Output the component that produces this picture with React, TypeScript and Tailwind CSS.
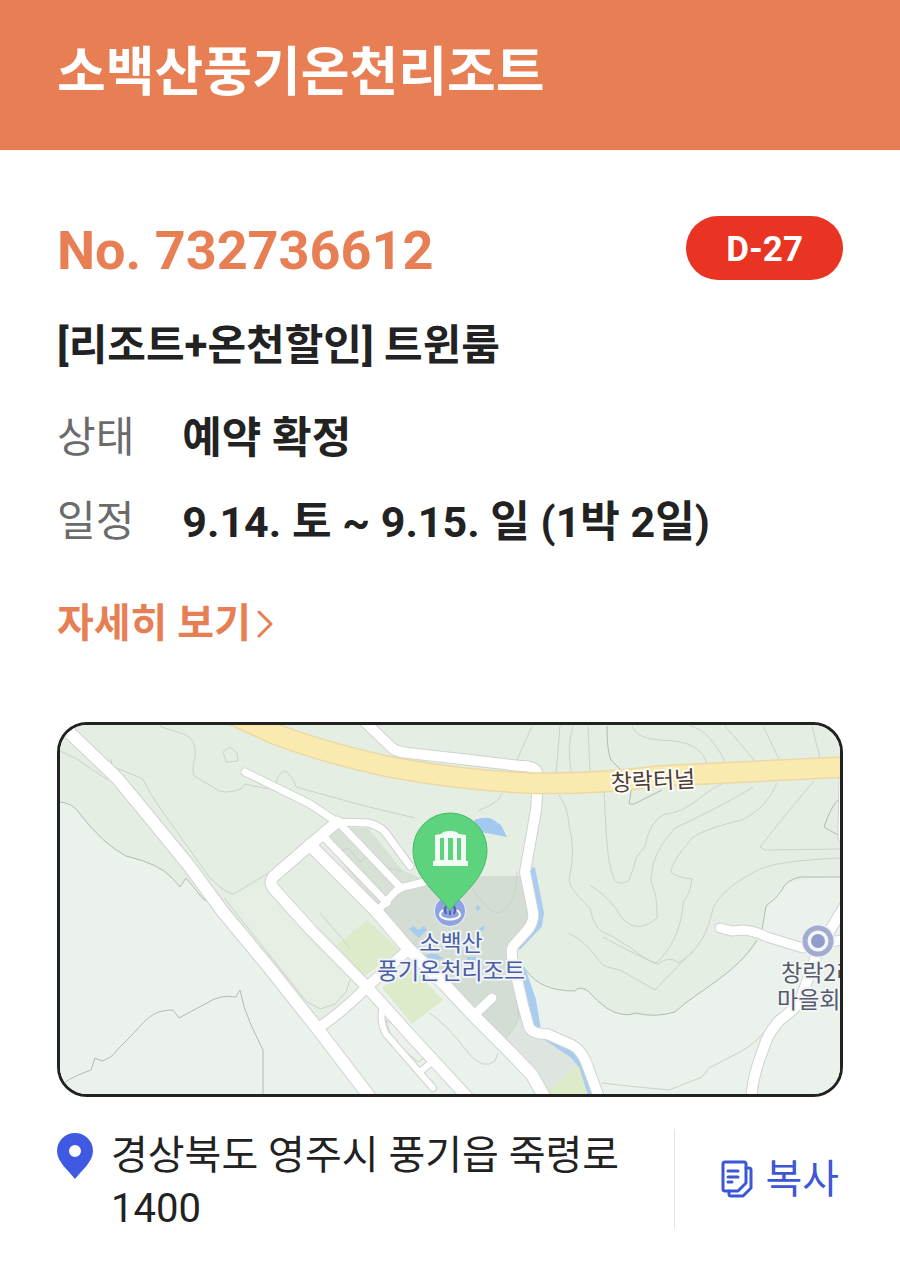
import type { ReactNode } from "react";

const FONT = "font-['Roboto','Noto_Sans_CJK_KR',sans-serif]";

type Road = { d: string; w: number };

const ROADS: Road[] = [
  { d: "M60 724 L70 733 L117 778 L150 818 L190 867 L223 912 L267 965 L317 1028 L372 1100", w: 12 },
  { d: "M337 822 L310 845 L273 877 Q269 883 274 889 L311 930 L367 987 L410 1035 L470 1100", w: 11 },
  { d: "M245 772 L310 804 L337 822 L368 823 Q378 825 385 832 L410 866", w: 7 },
  { d: "M340 824 L401 888", w: 7 },
  { d: "M323 836 L387 903", w: 7 },
  { d: "M378 910 L395 892 Q400 887 408 886 L432 880", w: 7 },
  { d: "M310 845 L377 912 L407 947 L443 983 L473 1015 L510 1052 L532 1075 L546 1100", w: 12 },
  { d: "M318 1028 Q340 1014 367 987 L409 949", w: 10 },
  { d: "M473 1016 L492 998", w: 9 },
  { d: "M382 1010 Q380 1024 386 1034 L433 1088", w: 6 },
  { d: "M420 1072 L434 1060", w: 6 },
  { d: "M363 720 L392 748 Q397 752 408 753 L470 760 L520 766 Q540 765 538 780 L536 810 L525 872 L533 912 Q535 923 524 934 L514 945 Q510 950 513 962 L523 1005 L529 1027 Q532 1034 547 1034 L572 1045 Q581 1050 586 1062 L600 1100", w: 10 },
  { d: "M720 928 L732 931 L743 930 Q756 931 767 937 L803 948 L845 939", w: 9 },
  { d: "M848 900 L818 951 L800 1001 Q794 1010 780 1020 Q768 1032 763 1050 Q753 1074 751 1100", w: 10 },
  { d: "M843 775 L842 838", w: 7 },
];

const CONTOURS: string[] = [
  "M160 726 C180 735 197 731 195 757 C192 768 193 775 194 776 L213 787 Q222 796 241 789 L245 784 L268 789",
  "M223 752 L230 747 L237 753 L238 761 L226 762 Z",
  "M60 751 L75 758 L108 780",
  "M111 759 L112 766 L143 779 Q147 790 165 815 L210 878 Q228 895 234 894 L283 864",
  "M275 784 Q281 768 287 772 Q295 780 296 787 L365 806 L415 818",
  "M478 811 Q503 800 501 794",
  "M532 726 L517 760",
  "M560 726 L556 774 M573 726 Q566 750 572 774",
  "M559 795 Q568 808 569 825 Q576 850 569 880 Q570 890 590 908 Q594 932 610 935 L631 948 Q653 965 658 964 Q669 955 679 963 L693 952",
  "M588 726 L590 772 M604 792 C606 815 605 860 615 881 Q621 886 629 880 Q634 868 636 858 L645 846 Q650 820 665 814 C690 812 702 792 722 784",
  "M632 726 C641 746 670 736 690 745 Q705 752 707 765",
  "M690 726 Q710 730 726 764 M725 726 L756 762",
  "M753 787 Q730 802 675 828 Q652 852 651 878 C651 890 657 885 657 918 Q637 935 622 918 Q611 898 590 885",
  "M777 783 Q767 808 742 820 Q710 827 693 837 Q671 862 671 872 Q675 877 692 879 Q690 895 683 902 C683 920 674 948 656 963 Q637 956 603 937",
  "M814 781 Q798 799 760 847 L765 850 L840 849",
  "M763 726 L779 759 M812 726 L820 758",
  "M840 858 Q777 861 760 869 Q720 889 713 909 Q706 942 687 957 L655 990 L620 970 Q603 967 600 962 Q585 940 568 933",
  "M320 913 L350 948 M350 980 L346 992 L335 1004 L320 1009 L306 1001 L224 898",
  "M602 1083 L628 1086 L669 1090 L702 1077 L709 1068 L738 1053 Q755 1044 764 1032",
  "M429 1013 Q445 1022 470 1055 Q484 1070 495 1061 L498 1053",
  "M517 980 L518 1020 Q512 1034 502 1041",
  "M386 1020 L392 1040 L418 1062 L425 1057 L405 1032 Z",
  "M335 854 L348 848 L360 862 L368 855 L388 868 L402 871",
  "M472 888 Q492 917 500 912 Q517 905 517 872",
];

const DARK_CONTOURS: string[] = [
  "M60 802 Q73 803 80 814 Q103 844 126 856 Q160 864 172 878 L180 887 L186 878 L204 900 L209 900",
  "M60 1088 Q63 1080 91 1070 L95 1058 L102 1061 Q112 1058 118 1049 L128 1039 C145 1022 150 1010 173 1010 L179 1018 L205 1004 Q220 994 236 997 L240 990 Q243 1007 251 1025 L263 1050 L263 1096",
  "M607 726 Q607 752 611 760 L620 769 M632 785 L629 804 L634 804 L662 790",
  "M839 799 Q831 806 824 827 L838 835",
  "M840 877 L800 877 Q786 880 782 890 Q776 899 766 906 L762 930",
  "M526 970 Q540 991 575 991 Q579 985 588 991 Q608 1013 621 1014 Q628 1016 636 1013 Q654 1018 675 1012 C700 989 735 975 757 940",
];

function ResortMap() {
  return (
    <svg viewBox="60 725 780 369" className="block h-auto w-full" role="img" aria-label="소백산 풍기온천리조트 지도">
      <rect x="60" y="725" width="780" height="369" fill="#e5eee3" />
      <path d="M60 802 Q73 803 80 814 Q103 844 126 856 Q160 864 180 887 L186 878 L209 900 L317 1028 L400 940 L460 1000 L545 1050 L600 1060 L600 1094 L60 1094 Z" fill="#ebf1eb" />
      <path d="M533 1094 L520 970 L530 975 Q548 991 588 991 Q608 1013 621 1014 Q650 1018 675 1012 C700 989 735 975 760 940 Q762 900 782 890 Q786 877 840 877 V1094 Z" fill="#ebf1eb" />
      <path d="M228 894 L268 883 L365 985 L320 1009 L306 1001 Z" fill="#e7efe5" />
      <path d="M343 828 L368 828 L402 870 L425 880 L398 891 Z M323 840 L340 828 L398 889 L378 907 Z" fill="#d7e1d6" />
      <path d="M378 912 L400 888 L430 880 L480 876 L524 876 L533 918 L511 946 L520 1000 L532 1034 L575 1054 L583 1065 L545 1096 L407 950 Z" fill="#d3ddd3" />
      <path d="M518 1020 Q512 1034 498 1045 L548 1094 L583 1063 L573 1046 L540 1036 L524 1012 Z" fill="#dee5df" />
      <path d="M337 945 L367 920 L400 950 L366 975 L358 973 Z M382 988 L396 978 L412 968 L443 1000 L412 1024 Z M546 1094 L578 1064 L592 1094 Z" fill="#ddebca" />

      <g fill="none" stroke="#cbd2ca" strokeWidth="1">
        {CONTOURS.map((d) => (
          <path key={d} d={d} />
        ))}
      </g>
      <g fill="none" stroke="#b3bab3" strokeWidth="1">
        {DARK_CONTOURS.map((d) => (
          <path key={d} d={d} />
        ))}
      </g>

      <g fill="none" stroke="#a9cdf0" strokeWidth="8" strokeLinejoin="round">
        <path d="M531 868 L540 913 L538 925 L517 947" />
        <path d="M521 968 L532 1000 L537 1030" />
        <path d="M546 1036 L574 1055 L583 1066 L593 1098" />
      </g>
      <path d="M474 820 Q486 816 492 819 L501 825 L507 837 Q492 834 480 832 Z" fill="#a3c9f1" />

      <g fill="none" stroke="#ced3cf" strokeLinecap="round" strokeLinejoin="round">
        {ROADS.map((r) => (
          <path key={r.d} d={r.d} strokeWidth={r.w + 2} />
        ))}
      </g>
      <g fill="none" stroke="#ffffff" strokeLinecap="round" strokeLinejoin="round">
        {ROADS.map((r) => (
          <path key={r.d} d={r.d} strokeWidth={r.w} />
        ))}
      </g>

      <g fill="none">
        <path d="M220 709 L275 734 Q325 753 390 767 Q460 780 527 783 Q590 785 660 776 L845 767" stroke="#ead9a3" strokeWidth="22" />
        <path d="M220 709 L275 734 Q325 753 390 767 Q460 780 527 783 Q590 785 660 776 L845 767" stroke="#fbeab0" strokeWidth="19" />
      </g>

      <path d="M409 929 L414 926 L418 930 L424 926 L427 930 L419 938 Z M478 905 L481 908 L478 911 L475 908 Z M478 930 L484 925 L484 929 L480 933 Z M426 955 Q436 951 443 959 L431 961 Z M467 957 H476 V962 H467 Z" fill="#a6cdec" />

      <circle cx="450" cy="911" r="16" fill="#e6ebf8" />
      <circle cx="450" cy="911" r="15" fill="#8fa3e2" />
      <path d="M443 910 Q437 915 443 918 Q450 921 457 918 Q463 915 457 910" fill="none" stroke="#ffffff" strokeWidth="2" />
      <path d="M446 906 Q444 910 446 914 M450 907 V915 M454 906 Q456 910 454 914" fill="none" stroke="#4f60b5" strokeWidth="2" />
      <path d="M450 911 C441 896 413 879 413 850 A37 37 0 0 1 487 850 C487 879 459 896 450 911 Z" fill="#5ed37d" stroke="#45b868" strokeWidth="1" />
      <path fillRule="evenodd" fill="#f1fcf4" d="M435 835 L441 834 Q443 831 450 831 Q457 831 459 834 L466 835 V861 H468 V866 H433 V861 H435 Z M440 838 V860 H444 V838 Z M448 838 V860 H453 V838 Z M457 838 V860 H461 V838 Z" />

      <circle cx="818" cy="941" r="17" fill="#eef1f5" />
      <circle cx="818" cy="941" r="13" fill="#f4f6fc" stroke="#a3abcf" strokeWidth="5" />
      <circle cx="818" cy="941" r="7" fill="#929cc8" />

      <g strokeLinejoin="round" paintOrder="stroke" className="font-['Noto_Sans_CJK_KR',sans-serif]">
        <g textAnchor="middle" fill="#4b5da6" stroke="#f0f4f8" strokeWidth="4" fontSize="23">
          <text x="451" y="951">소백산</text>
          <text x="451" y="979">풍기온천리조트</text>
        </g>
        <text x="653" y="789" textAnchor="middle" transform="rotate(-3 653 781)" fill="#4a3d3d" stroke="#fffdf2" strokeWidth="4" fontSize="23">
          창락터널
        </text>
        <g fill="#555b6b" stroke="#f2f5f4" strokeWidth="4" fontSize="23">
          <text x="781" y="981">창락2리</text>
          <text x="777" y="1008">마을회관</text>
        </g>
      </g>
    </svg>
  );
}

function Row({ label, children }: { label: string; children: ReactNode }) {
  return (
    <div className="flex gap-12">
      <dt className="shrink-0 text-[42px] text-[#6b6b6b]">{label}</dt>
      <dd className="text-[43px] font-bold text-[#222222]">{children}</dd>
    </div>
  );
}

export default function App() {
  return (
    <main className={`min-h-screen bg-white text-[#222222] ${FONT}`}>
      <header className="bg-[#e87f54] px-[57px] pt-[34px] pb-[38px]">
        <h1 className="text-[53px] leading-[78px] font-bold text-white">소백산풍기온천리조트</h1>
      </header>

      <div className="px-[57px] pt-[66px]">
        <div className="flex items-start justify-between">
          <p className="text-[54px] leading-[70px] font-bold text-[#e87f54]">No. 732736612</p>
          <span className="rounded-full bg-[#e93323] px-10 pt-[10px] pb-[6px] text-[35px] leading-[48px] font-bold text-white">D-27</span>
        </div>

        <h2 className="mt-7 text-[42px] leading-[64px] font-bold">[리조트+온천할인] 트윈룸</h2>

        <dl className="mt-7 flex flex-col gap-5 leading-[64px]">
          <Row label="상태">예약 확정</Row>
          <Row label="일정">9.14. 토 ~ 9.15. 일 (1박 2일)</Row>
        </dl>

        <a href="#detail" className="mt-[38px] inline-flex items-center gap-[6px] text-[40px] leading-[64px] font-bold text-[#e87f54]">
          자세히 보기
          <svg viewBox="0 0 16 28" className="h-7 w-4" fill="none" stroke="currentColor" strokeWidth="3" strokeLinecap="round" strokeLinejoin="round" aria-hidden="true">
            <path d="M2 2 L14 14 L2 26" />
          </svg>
        </a>

        <div className="mt-[66px] overflow-hidden rounded-[30px] border-[3px] border-[#222222]">
          <ResortMap />
        </div>

        <div className="mt-8 flex items-start pb-10">
          <svg viewBox="0 0 36 46" className="mt-1 h-[46px] w-9 shrink-0" aria-hidden="true">
            <path fillRule="evenodd" fill="#4059e3" d="M18 0 A18 18 0 0 1 36 18 C36 29 24 38 18 46 C12 38 0 29 0 18 A18 18 0 0 1 18 0 Z M18 12 A6 6 0 1 0 18 24 A6 6 0 1 0 18 12 Z" />
          </svg>
          <p className="ml-[18px] min-w-0 flex-1 text-[40px] leading-[53px] break-keep">경상북도 영주시 풍기읍 죽령로 1400</p>
          <div className="flex h-[100px] items-center border-l border-[#e4e4e4] pr-1 pl-[46px]">
            <button type="button" className="flex items-center gap-3 text-[40px] leading-[53px] text-[#3d56d6]">
              <svg viewBox="0 0 32 38" className="h-[38px] w-8" fill="none" stroke="currentColor" strokeWidth="3" strokeLinejoin="round" strokeLinecap="round" aria-hidden="true">
                <path d="M4 2 H23 Q25 2 25 4 V23 L17 31 H4 Q2 31 2 29 V4 Q2 2 4 2 Z" />
                <path d="M25 8 H28 Q30 8 30 10 V28 L22 36 H10 Q8 36 8 34 V31" />
                <path d="M7 11 H17 M7 17 H17 M7 22 H11" />
              </svg>
              복사
            </button>
          </div>
        </div>
      </div>
    </main>
  );
}
